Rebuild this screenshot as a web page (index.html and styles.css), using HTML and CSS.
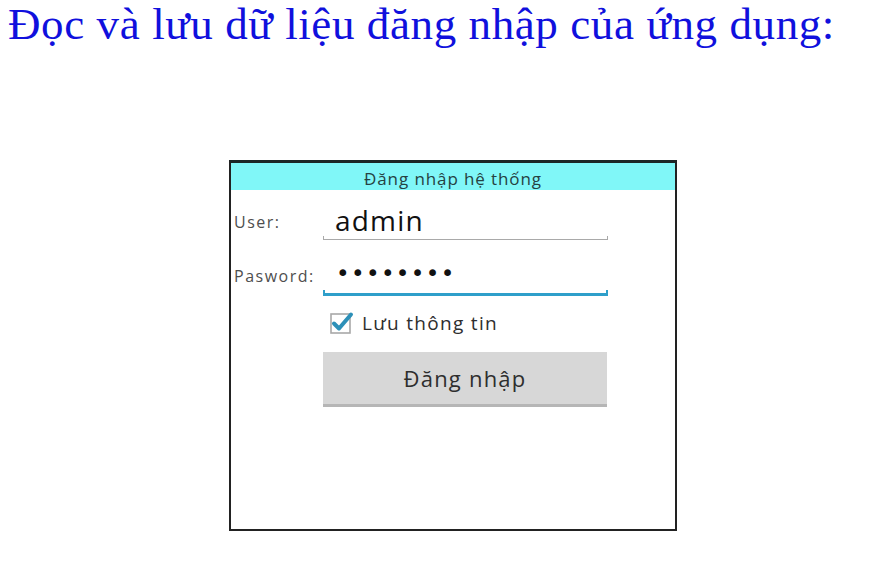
FILE: index.html
```html
<!DOCTYPE html>
<html lang="vi">
<head>
<meta charset="utf-8">
<title>Đọc và lưu dữ liệu đăng nhập</title>
<link rel="stylesheet" href="styles.css">
</head>
<body>
<h1 class="title">Đọc và lưu dữ liệu đăng nhập của ứng dụng:</h1>
<div class="phone">
  <div class="bar">Đăng nhập hệ thống</div>
  <div class="form">
    <div class="row row-user">
      <div class="label">User:</div>
      <div class="field">
        <div class="value">admin</div>
        <div class="line"></div>
      </div>
    </div>
    <div class="row row-pass">
      <div class="label">Pasword:</div>
      <div class="field">
        <div class="dots">••••••••</div>
        <div class="line line-active"></div>
      </div>
    </div>
    <div class="check-row">
      <svg class="check" width="24" height="24" viewBox="0 0 24 24">
        <rect x="1" y="3" width="19" height="19" fill="#fff" stroke="#a8a8a8" stroke-width="1.6"/>
        <path d="M4 12.5 L9 17.5 L21 3.5" fill="none" stroke="#2d90b8" stroke-width="4" stroke-linecap="round" stroke-linejoin="round"/>
      </svg>
      <span class="check-label">Lưu thông tin</span>
    </div>
    <div class="btn-row">
      <div class="btn">Đăng nhập</div>
    </div>
  </div>
</div>
</body>
</html>
```

FILE: styles.css
```css
html, body {
  margin: 0;
  padding: 0;
  background: #ffffff;
}

.title {
  margin: 0;
  padding-left: 8px;
  font-family: "Liberation Serif", "Times New Roman", serif;
  font-weight: normal;
  font-size: 45px;
  line-height: 48px;
  letter-spacing: 0.6px;
  color: #1010dd;
}

.phone {
  margin: 112px 0 0 229px;
  width: 444px;
  height: 366px;
  border: 2px solid #222;
  border-top: 3px solid #1c2727;
  background: #fff;
  font-family: "Open Sans", "Roboto", sans-serif;
}

.bar {
  height: 27px;
  background: #80f7f8;
  color: #264242;
  font-size: 17px;
  line-height: 31px;
  text-align: center;
  letter-spacing: 0.9px;
}

.form {
  padding-left: 3px;
}

.row {
  display: flex;
  align-items: flex-start;
}

.row-user {
  height: 51px;
}

.row-pass {
  height: 56px;
}

.label {
  width: 89px;
  font-size: 16px;
  line-height: 20px;
  color: #4e4e4e;
  letter-spacing: 1.5px;
}

.row-user .label {
  padding-top: 22px;
}

.row-pass .label {
  padding-top: 25px;
}

.field {
  width: 285px;
}

.row-user .field {
  margin-top: 15px;
}

.row-pass .field {
  margin-top: 20px;
}

.value {
  padding-left: 12px;
  font-size: 28px;
  line-height: 30px;
  color: #111;
  letter-spacing: 1.2px;
}

.dots {
  padding-left: 13px;
  font-family: "DejaVu Sans", sans-serif;
  font-size: 23px;
  line-height: 24px;
  letter-spacing: 1.4px;
  color: #111;
}

.line {
  height: 3px;
  border: 1px solid #a9a9a9;
  border-top: 0;
  margin-top: 1px;
}

.line-active {
  height: 3px;
  border: 2px solid #2f9fca;
  border-top: 0;
  border-bottom-width: 3px;
  margin-top: 5px;
}

.check-row {
  display: flex;
  align-items: center;
  margin: 14px 0 0 96px;
  height: 24px;
}

.check {
  display: block;
}

.check-label {
  margin-left: 8px;
  font-size: 19px;
  color: #2e2e2e;
  letter-spacing: 1.3px;
}

.btn-row {
  margin: 17px 0 0 89px;
}

.btn {
  width: 284px;
  height: 52px;
  background: #d7d7d7;
  border-bottom: 3px solid #b6b6b6;
  color: #2e2e2e;
  font-size: 22px;
  line-height: 52px;
  text-align: center;
  letter-spacing: 1.2px;
}
```
